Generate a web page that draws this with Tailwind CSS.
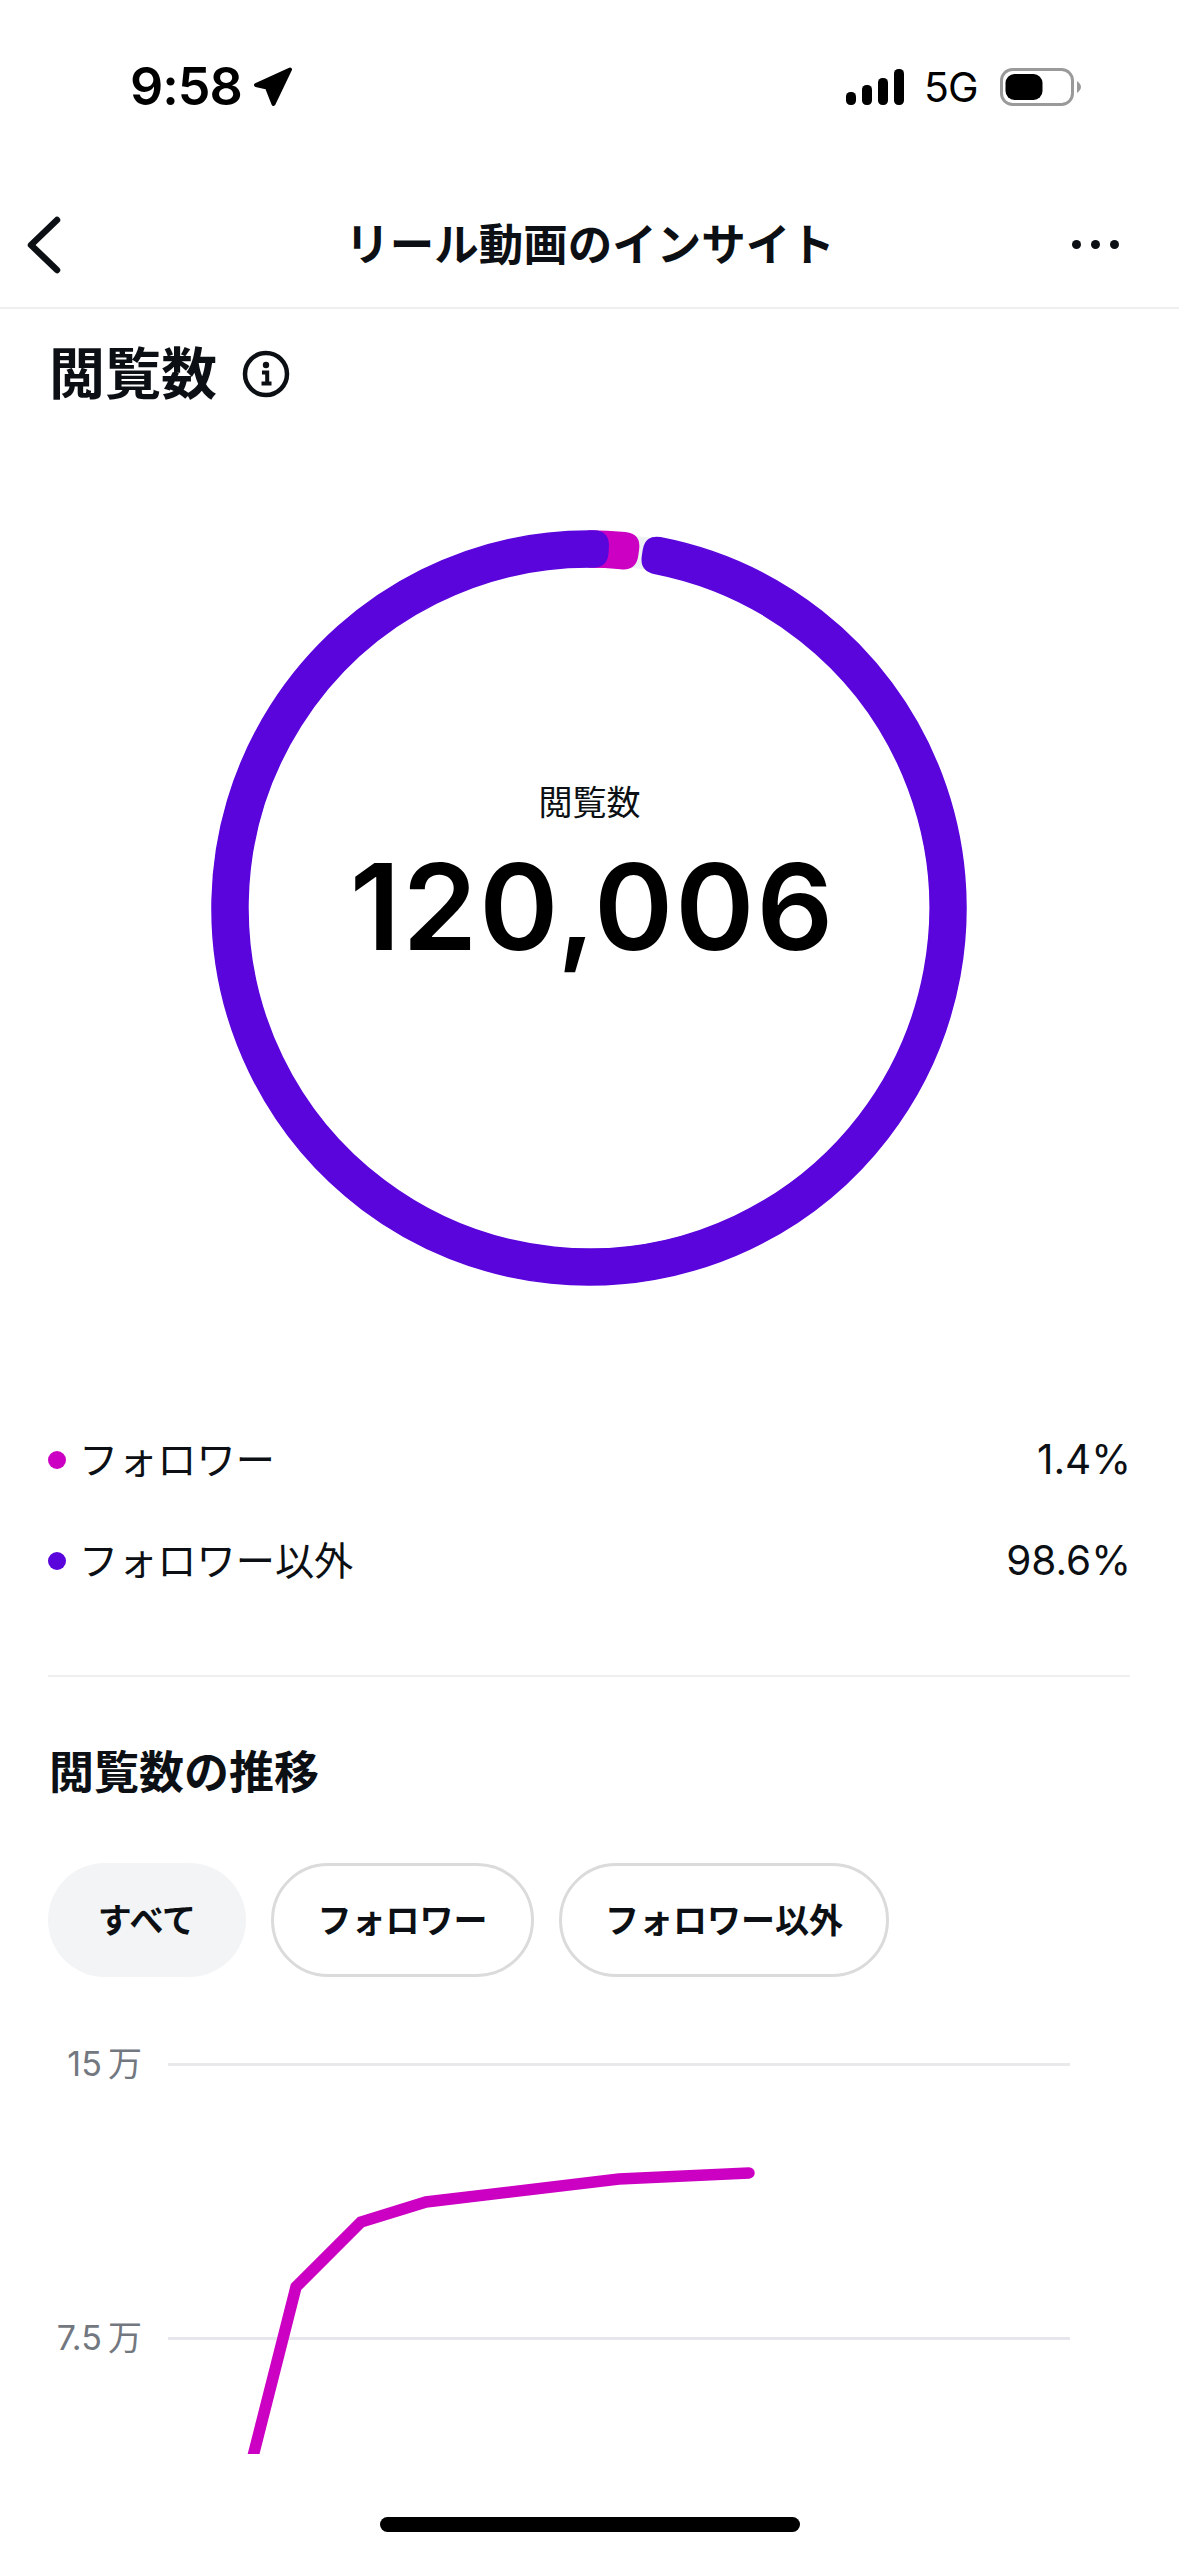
<!DOCTYPE html>
<html lang="ja"><head><meta charset="utf-8">
<script src="https://cdn.jsdelivr.net/npm/@tailwindcss/browser@4"></script>
</head>
<body class="bg-white">
<div class="relative w-[1179px] h-[2556px] overflow-hidden bg-white text-[#0c1014] font-['Inter','Noto_Sans_CJK_JP',sans-serif]">
  <!-- status bar -->
  <div class="h-[176px] flex items-start justify-between pt-[62px] pl-[130px] pr-[98px] text-black">
    <div class="flex items-center gap-[7px] h-[50px]">
      <span class="text-[52px] leading-[50px] font-semibold tracking-[-1px] w-[116px]">9:58</span>
      <svg class="w-[40px] h-[40px]" viewBox="0 0 40 40"><path fill="#000" stroke="#000" stroke-width="4" stroke-linejoin="round" d="M37 2.5 L3 18 L14 20.5 L20.5 37 Z"/></svg>
    </div>
    <div class="flex items-center h-[50px]">
      <svg class="w-[58px] h-[36px]" viewBox="0 0 58 36"><rect x="0" y="23" width="10" height="13" rx="4.5" fill="#000"/><rect x="16" y="16" width="10" height="20" rx="4.5" fill="#000"/><rect x="32" y="9" width="10" height="27" rx="4.5" fill="#000"/><rect x="48" y="0" width="10" height="36" rx="4.5" fill="#000"/></svg>
      <span class="ml-[20px] w-[55px] text-[41px] leading-[50px] tracking-[-1px]">5G</span>
      <svg class="ml-[21px] w-[81px] h-[38px]" viewBox="0 0 81 38"><rect x="1.5" y="1.5" width="71" height="35" rx="11" fill="none" stroke="#9a9a9a" stroke-width="3"/><rect x="5.5" y="6" width="37" height="26" rx="9" fill="#000"/><path d="M77 13 Q81 16 81 19 Q81 22 77 25 Z" fill="#9a9a9a"/></svg>
    </div>
  </div>
  <!-- nav -->
  <div class="h-[133px] border-b-2 border-[#efefef] flex items-center justify-between pl-[26px] pr-[60px] pt-[6px]">
    <svg class="w-[38px] h-[58px]" viewBox="0 0 38 58"><path d="M31 4 L5 29 L31 54" fill="none" stroke="#0c1014" stroke-width="6.5" stroke-linecap="round" stroke-linejoin="round"/></svg>
    <h1 class="text-[44.5px] leading-[60px] font-bold ml-[44px]">リール動画のインサイト</h1>
    <div class="flex gap-[10px]"><span class="w-[9px] h-[9px] rounded-full bg-[#0c1014]"></span><span class="w-[9px] h-[9px] rounded-full bg-[#0c1014]"></span><span class="w-[9px] h-[9px] rounded-full bg-[#0c1014]"></span></div>
  </div>
  <!-- title -->
  <div class="flex items-center px-[49px] pt-[30px] gap-[25px]">
    <h2 class="text-[56px] leading-[70px] font-bold">閲覧数</h2>
    <svg class="w-[48px] h-[48px]" viewBox="0 0 48 48"><circle cx="24" cy="24" r="21" fill="none" stroke="#0c1014" stroke-width="4.5"/><circle cx="24" cy="15" r="3.2" fill="#0c1014"/><path d="M20 22.5 H25.2 V33.5 M19.5 33.5 H29.5" fill="none" stroke="#0c1014" stroke-width="4"/></svg>
  </div>
  <!-- ring -->
  <div class="relative mt-[121px] h-[764px] w-full">
    <svg class="absolute left-0 top-0 w-[1179px] h-[764px]" viewBox="0 529 1179 764">
      <circle cx="589" cy="907" r="359" fill="none" stroke="#eef1f4" stroke-width="32"/>
      <path fill="#cc00c2" stroke="#cc00c2" stroke-width="1.5" d="M589 530 A377 377 0 0 1 625.52 531.77 Q640.42 533.52 638.38 548.38 L637.56 554.33 Q635.51 569.19 620.62 567.47 A341 341 0 0 0 589 566 Z"/>
      <path fill="#5a05dc" stroke="#5a05dc" stroke-width="1.5" d="M660.49 536.84 A377 377 0 1 1 593.93 530.03 Q608.93 530.53 608.14 545.51 L607.82 551.5 Q607.03 566.48 592.03 566.01 A341 341 0 1 0 655.06 572.46 Q640.29 569.88 642.54 555.05 L643.44 549.12 Q645.7 534.29 660.49 536.84 Z"/>
    </svg>
    <div class="absolute inset-0 flex flex-col items-center pt-[250px]">
      <span class="text-[34px] leading-[46px]">閲覧数</span>
      <span class="text-[120px] leading-[150px] font-semibold tracking-[2px] text-black mt-[6px] ml-[6px]">120,006</span>
    </div>
  </div>
  <!-- legend -->
  <div class="mt-[141px] pl-[48px] pr-[48px] flex flex-col gap-[51px]">
    <div class="flex items-center justify-between h-[50px]">
      <div class="flex items-center gap-[13px]"><span class="w-[18px] h-[18px] rounded-full bg-[#cc00c2]"></span><span class="text-[39.2px] leading-[50px]">フォロワー</span></div>
      <span class="text-[40.5px] leading-[50px]">1.4%</span>
    </div>
    <div class="flex items-center justify-between h-[50px]">
      <div class="flex items-center gap-[13px]"><span class="w-[18px] h-[18px] rounded-full bg-[#5a05dc]"></span><span class="text-[39.2px] leading-[50px]">フォロワー以外</span></div>
      <span class="text-[40.5px] leading-[50px]">98.6%</span>
    </div>
  </div>
  <div class="ml-[48px] mr-[49px] mt-[89px] h-[2px] bg-[#efefef]"></div>
  <h3 class="mx-[49px] mt-[66px] text-[45px] leading-[60px] font-bold">閲覧数の推移</h3>
  <div class="flex gap-[25px] pl-[48px] mt-[60px]">
    <div class="h-[114px] w-[198px] rounded-full bg-[#f3f4f6] flex items-center justify-center text-[34px] font-bold">すべて</div>
    <div class="h-[114px] w-[263px] rounded-full border-[3px] border-[#dbdbdb] flex items-center justify-center text-[34px] font-bold">フォロワー</div>
    <div class="h-[114px] w-[330px] rounded-full border-[3px] border-[#dbdbdb] flex items-center justify-center text-[34px] font-bold">フォロワー以外</div>
  </div>
  <!-- chart -->
  <div class="relative mt-[67px] h-[454px] flex flex-col">
    <div class="flex items-center h-[40px] pr-[109px]">
      <span class="w-[142px] text-right text-[34px] leading-[40px] text-[#737880]">15&#8201;万</span>
      <div class="ml-[26px] flex-1 h-[3px] bg-[#e9e9ec]"></div>
    </div>
    <div class="flex items-center h-[40px] mt-[234px] pr-[109px]">
      <span class="w-[142px] text-right text-[34px] leading-[40px] text-[#737880]">7.5&#8201;万</span>
      <div class="ml-[26px] flex-1 h-[3px] bg-[#e6e6ec]"></div>
    </div>
    <svg class="absolute left-0 top-0 w-[1179px] h-[410px]" viewBox="0 2044 1179 410">
      <path d="M247 2480 L296 2287 L361 2222 L426 2202 L619 2179 L749 2173" fill="none" stroke="#cc00c2" stroke-width="11.5" stroke-linejoin="miter" stroke-linecap="round"/>
    </svg>
  </div>
  <!-- home bar -->
  <div class="absolute left-[380px] top-[2517px] w-[420px] h-[15px] rounded-full bg-black"></div>
</div>
</body></html>
